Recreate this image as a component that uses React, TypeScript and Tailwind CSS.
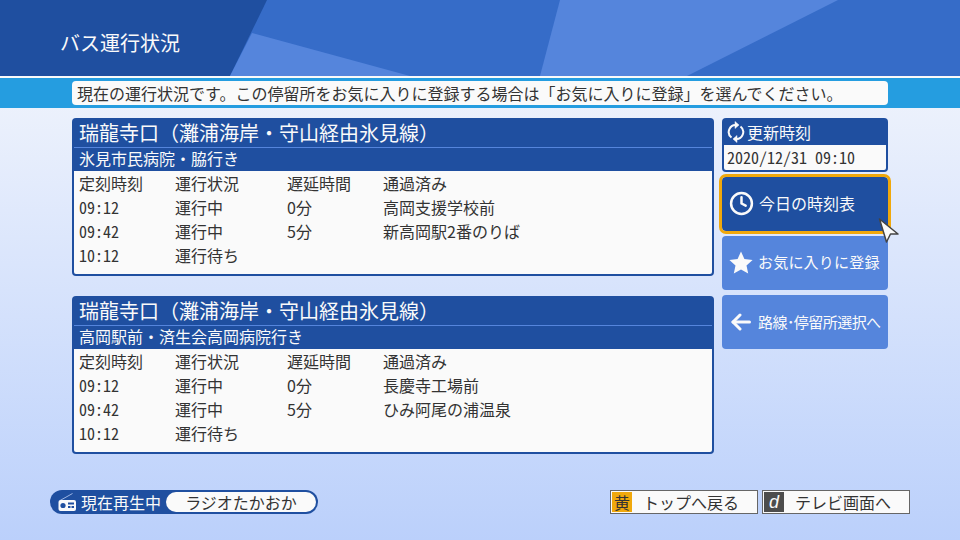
import { Clock } from 'lucide-react';
import type { ReactNode } from 'react';

type Row = { time: string; status: string; delay: string; passed: string };

type Bus = { line: string; dest: string; rows: Row[] };

const buses: Bus[] = [
  {
    line: '瑞龍寺口（灘浦海岸・守山経由氷見線）',
    dest: '氷見市民病院・脇行き',
    rows: [
      { time: '09:12', status: '運行中', delay: '0分', passed: '高岡支援学校前' },
      { time: '09:42', status: '運行中', delay: '5分', passed: '新高岡駅2番のりば' },
      { time: '10:12', status: '運行待ち', delay: '', passed: '' },
    ],
  },
  {
    line: '瑞龍寺口（灘浦海岸・守山経由氷見線）',
    dest: '高岡駅前・済生会高岡病院行き',
    rows: [
      { time: '09:12', status: '運行中', delay: '0分', passed: '長慶寺工場前' },
      { time: '09:42', status: '運行中', delay: '5分', passed: 'ひみ阿尾の浦温泉' },
      { time: '10:12', status: '運行待ち', delay: '', passed: '' },
    ],
  },
];

function BusCard({ bus }: { bus: Bus }) {
  return (
    <div className="flex h-[158px] flex-col rounded-[4px] bg-[#1f4fa0] p-[2px] pt-0">
      <div className="h-[30px] border-b border-[#5585dc] pl-[5px] text-[20px] leading-[30px] text-[#fafafa]">
        {bus.line}
      </div>
      <div className="h-[23px] pl-[5px] text-[16px] leading-[21px] text-[#fafafa]">
        {bus.dest}
      </div>
      <div className="flex-1 rounded-b-[2px] bg-[#fafafa] pl-[5px] pt-0 text-[16px] leading-[24px] text-[#333333]">
        <div className="grid grid-cols-[96px_112px_96px_1fr]">
          <span>定刻時刻</span>
          <span>運行状況</span>
          <span>遅延時間</span>
          <span>通過済み</span>
        </div>
        {bus.rows.map((row) => (
          <div key={row.time} className="grid grid-cols-[96px_112px_96px_1fr]">
            <span className="[font-feature-settings:'hwid']">{row.time}</span>
            <span>{row.status}</span>
            <span>{row.delay}</span>
            <span>{row.passed}</span>
          </div>
        ))}
      </div>
    </div>
  );
}

function RefreshIcon() {
  return (
    <svg width="18" height="22" viewBox="0 0 18 22" fill="none" stroke="#fafafa" strokeWidth="2">
      <path d="M9.5 4 A7 7 0 0 0 4.5 16.5" />
      <path d="M8.5 18 A7 7 0 0 0 13.5 5.5" />
      <path d="M8 0.5 L12 4 L8 7.5 Z" fill="#fafafa" strokeWidth="0.5" />
      <path d="M10 14.5 L6 18 L10 21.5 Z" fill="#fafafa" strokeWidth="0.5" />
    </svg>
  );
}

function StarIcon() {
  return (
    <svg width="24" height="23" viewBox="0 0 24 23">
      <polygon
        points="12,0.5 15.4,8 23.6,8.9 17.5,14.4 19.2,22.5 12,18.4 4.8,22.5 6.5,14.4 0.4,8.9 8.6,8"
        fill="#fafafa"
      />
    </svg>
  );
}

function BackIcon() {
  return (
    <svg width="20" height="18" viewBox="0 0 20 18" fill="none" stroke="#fafafa" strokeWidth="3" strokeLinecap="round" strokeLinejoin="round">
      <path d="M2 9 H18.5" />
      <path d="M9 2 L2 9 L9 16" />
    </svg>
  );
}

function RadioIcon() {
  return (
    <svg width="19" height="19" viewBox="0 0 19 19" fill="none">
      <path d="M2 7.5 L14.5 0.5" stroke="#9db5e2" strokeWidth="1" />
      <rect x="0.5" y="7" width="17.5" height="11" rx="2" fill="#fafafa" />
      <circle cx="5" cy="12.5" r="2.6" fill="#1f4fa0" />
      <rect x="10" y="9.5" width="6" height="2" fill="#1f4fa0" />
      <rect x="10" y="13" width="2.5" height="2" fill="#1f4fa0" />
      <rect x="13.5" y="13" width="2.5" height="2" fill="#1f4fa0" />
    </svg>
  );
}

function Cursor() {
  return (
    <svg width="22" height="27" viewBox="0 0 22 27" className="absolute left-[878px] top-[217px]">
      <path d="M1.5 2 L20 17 L12.5 17 L8.5 25 Z" fill="#fafafa" stroke="#444444" strokeWidth="1.5" strokeLinejoin="round" />
    </svg>
  );
}

function KeyButton({ label, children }: { label: string; children: ReactNode }) {
  return (
    <div className="flex h-[24px] w-[148px] items-center border border-[#666666] bg-[#fafafa] p-px text-[16px] leading-[20px] text-[#333333]">
      {children}
      <span className="ml-[11px]">{label}</span>
    </div>
  );
}

export default function App() {
  return (
    <div className="relative flex h-[540px] w-[960px] flex-col overflow-hidden bg-gradient-to-b from-[#f8f9fc] to-[#bbd0fb] font-['Noto_Sans_CJK_JP','Noto_Sans',sans-serif] [text-spacing-trim:space-all]">
      <header className="relative h-[76px] bg-[#1f4fa0]">
        <svg width="960" height="76" viewBox="0 0 960 76" className="absolute left-0 top-0">
          <polygon points="267,0 960,0 960,76 230,76" fill="#366cc8" />
          <polygon points="252,33 410,76 230,76" fill="#5585dc" />
          <polygon points="560,0 838,0 687,76 540,76" fill="#5585dc" />
        </svg>
        <h1 className="relative pl-[60px] pt-[28px] text-[20px] leading-[30px] font-normal text-[#fafafa]">
          バス運行状況
        </h1>
      </header>

      <div className="border-t-2 border-[#fafafa] bg-[#259de0] pl-[72px] pt-[3px] pb-[3px]">
        <div className="h-[24px] w-[816px] rounded-[4px] bg-[#fafafa] pl-[5px] text-[16px] leading-[24px] text-[#333333]">
          現在の運行状況です。この停留所をお気に入りに登録する場合は「お気に入りに登録」を選んでください。
        </div>
      </div>

      <main className="flex gap-[8px] pl-[72px] pt-[10px]">
        <div className="flex w-[642px] flex-col gap-[20px]">
          {buses.map((bus) => (
            <BusCard key={bus.dest} bus={bus} />
          ))}
        </div>

        <div className="flex w-[166px] flex-col gap-[5px]">
          <div className="flex h-[54px] flex-col rounded-[4px] bg-[#1f4fa0] p-[2px] pt-0">
            <div className="flex h-[27px] items-center gap-[2px] pl-[3px] text-[16px] text-[#fafafa]">
              <RefreshIcon />
              更新時刻
            </div>
            <div className="flex-1 rounded-b-[2px] bg-[#fafafa] pl-[3px] text-[16px] leading-[25px] text-[#333333] [font-feature-settings:'hwid']">
              2020/12/31 09:10
            </div>
          </div>

          <div className="flex h-[54px] items-center gap-[5px] rounded-[4px] bg-[#1f4fa0] pb-[2px] pl-[7px] text-[16px] text-[#fafafa] outline-[3px] outline-[#f0a80c]">
            <Clock size={25} strokeWidth={2.4} />
            今日の時刻表
          </div>

          <div className="flex h-[54px] items-center gap-[5px] rounded-[4px] bg-[#5585dc] pb-[2px] pl-[7px] text-[15px] tracking-[0.2px] text-[#fafafa]">
            <StarIcon />
            お気に入りに登録
          </div>

          <div className="flex h-[54px] items-center gap-[7px] rounded-[4px] bg-[#5585dc] pl-[9px] text-[15px] tracking-[-0.55px] text-[#fafafa]">
            <BackIcon />
            路線･停留所選択へ
          </div>
        </div>
      </main>

      <footer className="mt-[36px] flex items-center pl-[50px]">
        <div className="flex h-[24px] w-[268px] items-center rounded-full bg-[#1f4fa0] pl-[8px] pr-[2px] text-[16px] text-[#fafafa]">
          <RadioIcon />
          <span className="ml-[4px] w-[85px]">現在再生中</span>
          <span className="flex h-[20px] flex-1 items-center justify-center rounded-full bg-[#fafafa] text-[#333333]">
            ラジオたかおか
          </span>
        </div>
        <div className="ml-[292px] flex gap-[4px]">
          <KeyButton label="トップへ戻る">
            <span className="flex h-[20px] w-[20px] items-center justify-center bg-[#f0a80c] text-[#333333]">黄</span>
          </KeyButton>
          <KeyButton label="テレビ画面へ">
            <span className="flex h-[20px] w-[20px] items-center justify-center bg-[#4d4d4d] font-['Liberation_Sans',sans-serif] text-[18px] italic text-[#fafafa]">d</span>
          </KeyButton>
        </div>
      </footer>

      <Cursor />
    </div>
  );
}
